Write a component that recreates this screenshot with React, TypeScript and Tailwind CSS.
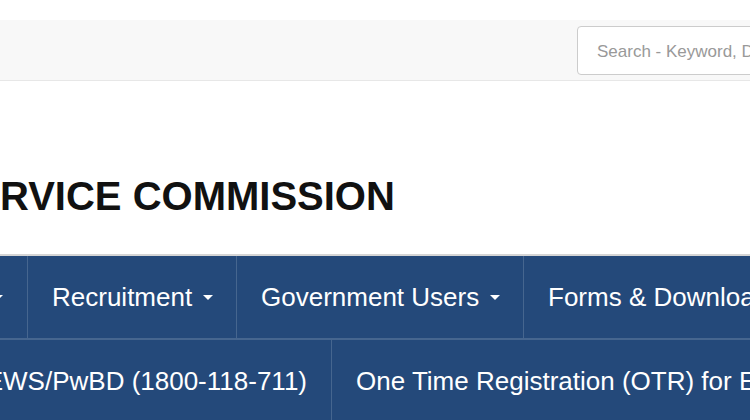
import React from "react";

function Caret() {
  return (
    <span className="ml-[11px] inline-block h-0 w-0 border-l-[5px] border-r-[5px] border-t-[5px] border-l-transparent border-r-transparent border-t-white" />
  );
}

export default function App() {
  return (
    <div
      className="w-[750px] h-[420px] overflow-hidden bg-white"
      style={{ fontFamily: '"Liberation Sans", Arial, Helvetica, sans-serif' }}
    >
      <div className="h-5" />
      <div className="h-[61px] bg-[#f8f8f8] border-b border-[#e7e7e7] flex items-center pl-[577px] overflow-hidden">
        <div className="shrink-0 w-[260px] h-[49px] rounded border border-[#cccccc] bg-white flex items-center pl-[19px] pt-[3px] text-[17px] text-[#999999] whitespace-nowrap">
          Search - Keyword, Document, Sections
        </div>
      </div>
      <div className="h-[173px] pt-[95px]">
        <h1 className="text-[40px] leading-none font-bold text-[#111111] whitespace-nowrap">
          RVICE COMMISSION
        </h1>
      </div>
      <nav className="border-t-2 border-[#d5d5d5] bg-[#24497a] text-white text-[26px] whitespace-nowrap">
        <div className="h-[84px] flex border-b-2 border-[#46668f] overflow-hidden">
          <div className="shrink-0 w-[28px] border-r border-[#46668f] flex items-center justify-end pr-6">
            <span className="inline-block h-0 w-0 border-l-[5px] border-r-[5px] border-t-[5px] border-l-transparent border-r-transparent border-t-white" />
          </div>
          <div className="shrink-0 w-[209px] border-r border-[#46668f] flex items-center pl-6">
            Recruitment
            <Caret />
          </div>
          <div className="shrink-0 w-[287px] border-r border-[#46668f] flex items-center pl-6">
            Government Users
            <Caret />
          </div>
          <div className="shrink-0 flex items-center pl-6">Forms &amp; Downloads</div>
        </div>
        <div className="h-[82px] flex overflow-hidden">
          <div className="shrink-0 w-[332px] border-r border-[#46668f] flex items-center justify-end pr-6 overflow-hidden">
            EWS/PwBD (1800-118-711)
          </div>
          <div className="shrink-0 flex items-center pl-6">
            One Time Registration (OTR) for Examinations
          </div>
        </div>
      </nav>
    </div>
  );
}
